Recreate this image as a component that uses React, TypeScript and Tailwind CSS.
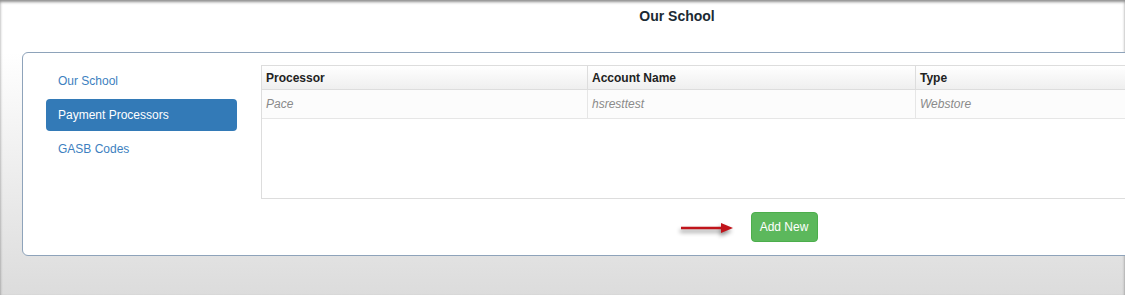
const navItems = ["Our School", "Payment Processors", "GASB Codes"];

const rows = [{ processor: "Pace", account: "hsresttest", type: "Webstore" }];

const RedArrow = () => (
  <svg
    width="58"
    height="16"
    viewBox="0 0 58 16"
    className="absolute left-[-72px] top-[8px] drop-shadow-[-1px_3px_2px_rgba(0,0,0,0.45)]"
  >
    <line x1="2" y1="8" x2="44" y2="8" stroke="#c0141b" strokeWidth="2.5" />
    <polygon points="42,3 54,8 42,13" fill="#c0141b" />
  </svg>
);

export default function App() {
  return (
    <div className="h-[295px] w-full overflow-hidden bg-gradient-to-b from-white from-[18%] to-[#dcdcdc] shadow-[inset_0_2px_3px_rgba(0,0,0,0.45)] font-['Liberation_Sans',Arial,sans-serif]">
      <div className="w-[1354px]">
        <h1 className="pt-[6px] text-center text-[14px] font-bold leading-[20px] text-[#1b2a33]">
          Our School
        </h1>

        <div className="mx-[22px] mt-[26px] flex gap-[24px] rounded-[6px] border border-[#8ea3ba] bg-white pl-[23px] pr-[24px] pt-[12px] pb-[13px]">
          <nav className="flex w-[191px] shrink-0 flex-col gap-[2px]">
            {navItems.map((item) => (
              <div
                key={item}
                className={
                  item === "Payment Processors"
                    ? "flex h-[32px] items-center rounded-[4px] bg-[#337ab7] px-[12px] text-[12px] text-white"
                    : "flex h-[32px] items-center rounded-[4px] px-[12px] text-[12px] text-[#3d7fc0]"
                }
              >
                {item}
              </div>
            ))}
          </nav>

          <div className="flex flex-1 flex-col items-center">
            <div className="h-[134px] w-full border border-[#dddddd]">
              <div className="flex h-[24px] border-b border-[#dddddd] bg-gradient-to-b from-white to-[#efefef] text-[12px] font-bold text-[#222]">
                <div className="flex w-[326px] items-center border-r border-[#dddddd] px-[4px]">Processor</div>
                <div className="flex w-[328px] items-center border-r border-[#dddddd] px-[4px]">Account Name</div>
                <div className="flex flex-1 items-center px-[4px]">Type</div>
              </div>
              {rows.map((r) => (
                <div
                  key={r.account}
                  className="flex h-[29px] border-b border-[#e6e6e6] bg-[#fcfcfc] text-[12px] italic text-[#8a8a8a]"
                >
                  <div className="flex w-[326px] items-center border-r border-[#e6e6e6] px-[4px]">{r.processor}</div>
                  <div className="flex w-[328px] items-center border-r border-[#e6e6e6] px-[4px]">{r.account}</div>
                  <div className="flex flex-1 items-center px-[4px]">{r.type}</div>
                </div>
              ))}
            </div>

            <div className="relative mt-[13px]">
              <RedArrow />
              <button className="flex h-[30px] w-[67px] items-center justify-center rounded-[4px] border border-[#4cae4c] bg-[#5cb85c] text-[12px] text-white">
                Add New
              </button>
            </div>
          </div>
        </div>
      </div>
    </div>
  );
}
